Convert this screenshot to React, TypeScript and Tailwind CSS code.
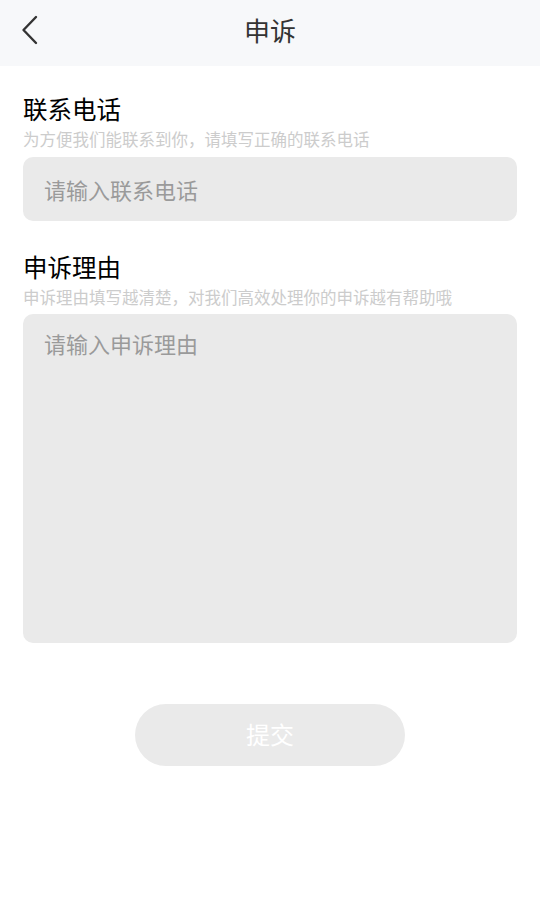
const font = { fontFamily: '"Noto Sans CJK SC", "Noto Sans", sans-serif' };

function Field({
  label,
  hint,
  placeholder,
  tall,
}: {
  label: string;
  hint: string;
  placeholder: string;
  tall?: boolean;
}) {
  return (
    <div>
      <h2 className="text-[24.5px] leading-[30px] text-black">{label}</h2>
      <p className="mt-[4px] text-[16.5px] leading-[22px] text-[#cccccc]">{hint}</p>
      {tall ? (
        <div className="mt-[6px] h-[329px] rounded-[10px] bg-[#eaeaea] px-[21px] pt-[14px] text-[22px] leading-[30px] text-[#9a9a9a]">
          {placeholder}
        </div>
      ) : (
        <div className="mt-[7px] flex h-[64px] items-center rounded-[10px] bg-[#eaeaea] px-[21px] text-[22px] text-[#9a9a9a]">
          {placeholder}
        </div>
      )}
    </div>
  );
}

export default function App() {
  return (
    <div className="min-h-[924px] w-[540px] bg-white" style={font}>
      {/* Header */}
      <div className="relative flex h-[66px] items-center justify-center bg-[#f7f8fa] pb-[7px]">
        <svg
          className="absolute left-[17px] top-[13px]"
          width="26"
          height="34"
          viewBox="0 0 26 34"
          fill="none"
        >
          <path
            d="M19 4 L6.5 17 L19 30"
            stroke="#333"
            strokeWidth="2.4"
            strokeLinecap="round"
            strokeLinejoin="round"
          />
        </svg>
        <h1 className="text-[26px] text-[#333]">申诉</h1>
      </div>

      <div className="px-[23px] pt-[28px]">
        <Field
          label="联系电话"
          hint="为方便我们能联系到你，请填写正确的联系电话"
          placeholder="请输入联系电话"
        />
        <div className="mt-[31px]">
          <Field
            label="申诉理由"
            hint="申诉理由填写越清楚，对我们高效处理你的申诉越有帮助哦"
            placeholder="请输入申诉理由"
            tall
          />
        </div>
      </div>

      <div className="mt-[61px] flex justify-center">
        <button className="h-[62px] w-[270px] rounded-full bg-[#eaeaea] pb-[3px] text-[24px] text-white">
          提交
        </button>
      </div>
    </div>
  );
}
